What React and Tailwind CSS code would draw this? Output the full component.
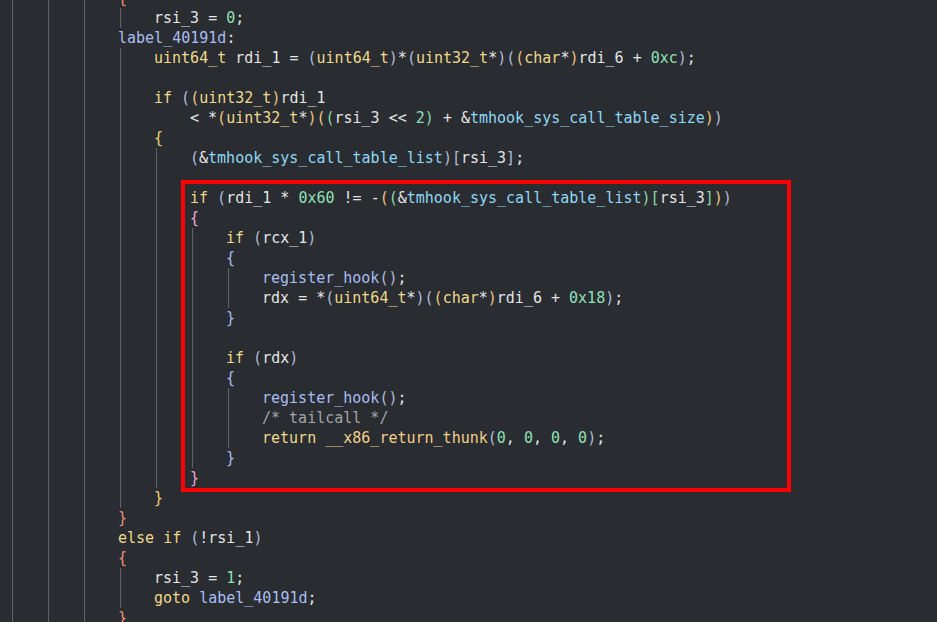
import React from "react";

// [indent level, text, paren depth at line start, guide count]
const lines = [
    [3, "{"],
    [4, "rsi_3 = 0;"],
    [3, "label_40191d:"],
    [4, "uint64_t rdi_1 = (uint64_t)*(uint32_t*)((char*)rdi_6 + 0xc);"],
    [4, ""],
    [4, "if ((uint32_t)rdi_1"],
    [5, "< *(uint32_t*)((rsi_3 << 2) + &tmhook_sys_call_table_size))", 1, 4],
    [4, "{"],
    [5, "(&tmhook_sys_call_table_list)[rsi_3];"],
    [5, ""],
    [5, "if (rdi_1 * 0x60 != -((&tmhook_sys_call_table_list)[rsi_3]))"],
    [5, "{"],
    [6, "if (rcx_1)"],
    [6, "{"],
    [7, "register_hook();"],
    [7, "rdx = *(uint64_t*)((char*)rdi_6 + 0x18);"],
    [6, "}"],
    [6, ""],
    [6, "if (rdx)"],
    [6, "{"],
    [7, "register_hook();"],
    [7, "/* tailcall */"],
    [7, "return __x86_return_thunk(0, 0, 0, 0);"],
    [6, "}"],
    [5, "}"],
    [4, "}"],
    [3, "}"],
    [3, "else if (!rsi_1)"],
    [3, "{"],
    [4, "rsi_3 = 1;"],
    [4, "goto label_40191d;"],
    [3, "}"],
];

const keywords = ["if", "else", "goto", "return", "uint64_t", "uint32_t", "char"];

// rainbow colours
const parens = ["text-[#aebbd9]", "text-[#ebc57c]", "text-[#86d9a9]"];
const braces = {
    3: "text-[#ef8d7e]",
    4: "text-[#efd172]",
    5: "text-[#eea7d6]",
    6: "text-[#a9bdf2]",
};

function colorOf(tok) {
    if (tok.startsWith("/*")) return "text-[#a2a4a7]";
    if (keywords.includes(tok)) return "text-[#efd98c]";
    if (/^(0x[0-9a-f]+|\d+)$/i.test(tok)) return "text-[#8ee0b5]";
    if (tok === "label_40191d" || tok === "register_hook") return "text-[#a9bdf2]";
    if (tok.startsWith("tmhook")) return "text-[#8fd8f5]";
    if (tok === "__x86_return_thunk") return "text-[#f3cf8c]";
    return "text-[#e4e5e6]";
}

function tokenize(text, lvl, depth0 = 0) {
    const re = /(\/\*.*?\*\/)|([A-Za-z_]\w*)|(0x[0-9a-fA-F]+|\d+)|(\s+)|(<<|!=|.)/g;
    const out = [];
    let depth = depth0;
    let m;
    while ((m = re.exec(text))) {
        const tok = m[0];
        let cls;
        if (tok === "(" || tok === "[") {
            cls = parens[depth % 3];
            depth++;
        } else if (tok === ")" || tok === "]") {
            depth--;
            cls = parens[depth % 3];
        } else if (tok === "{" || tok === "}") {
            cls = braces[lvl];
        } else {
            cls = colorOf(tok);
        }
        out.push([tok, cls]);
    }
    return out;
}

function CodeLine({ lvl, text, depth0, guides }) {
    const n = guides ?? lvl;
    return (
        <div className="relative h-[20px] leading-[20px] whitespace-pre" style={{ paddingLeft: 10 + lvl * 36 }}>
            {Array.from({ length: n }).map((_, k) => (
                <span
                    key={k}
                    className="absolute top-0 h-[20px] w-px bg-[#5e6166]"
                    style={{ left: 12 + k * 36 }}
                />
            ))}
            {tokenize(text, lvl, depth0).map(([t, cls], i) => (
                <span key={i} className={cls}>
                    {t}
                </span>
            ))}
        </div>
    );
}

export default function App() {
    return (
        <div className="relative w-[937px] h-[622px] overflow-hidden bg-[#292c30] text-[15px] font-['DejaVu_Sans_Mono',monospace]">
            <div className="-mt-[12px]">
                {lines.map(([lvl, text, depth0, guides], i) => (
                    <CodeLine key={i} lvl={lvl} text={text} depth0={depth0} guides={guides} />
                ))}
            </div>

            {/* highlight box */}
            <div className="absolute left-[181px] top-[180px] w-[610px] h-[312px] border-4 border-[#ff0000] pointer-events-none" />
        </div>
    );
}
